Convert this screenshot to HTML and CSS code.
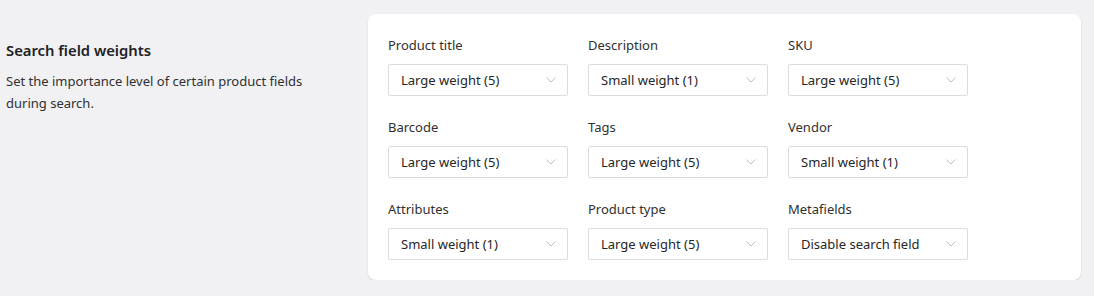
FILE: index.html
```html
<!DOCTYPE html>
<html lang="en">
<head>
<meta charset="UTF-8">
<meta name="viewport" content="width=device-width, initial-scale=1.0">
<title>Search field weights</title>
<link rel="stylesheet" href="styles.css">
</head>
<body>
<div class="section">
    <!-- Section description -->
    <div class="section-info">
        <h2>Search field weights</h2>
        <p>Set the importance level of certain product fields during search.</p>
    </div>

    <!-- Weights card -->
    <div class="card">
        <div class="field-grid">
            <div class="field">
                <label>Product title</label>
                <div class="select"><span>Large weight (5)</span><svg viewBox="0 0 10 6"><path d="M0.5 0.5 L5 5 L9.5 0.5"/></svg></div>
            </div>
            <div class="field">
                <label>Description</label>
                <div class="select"><span>Small weight (1)</span><svg viewBox="0 0 10 6"><path d="M0.5 0.5 L5 5 L9.5 0.5"/></svg></div>
            </div>
            <div class="field">
                <label>SKU</label>
                <div class="select"><span>Large weight (5)</span><svg viewBox="0 0 10 6"><path d="M0.5 0.5 L5 5 L9.5 0.5"/></svg></div>
            </div>
            <div class="field">
                <label>Barcode</label>
                <div class="select"><span>Large weight (5)</span><svg viewBox="0 0 10 6"><path d="M0.5 0.5 L5 5 L9.5 0.5"/></svg></div>
            </div>
            <div class="field">
                <label>Tags</label>
                <div class="select"><span>Large weight (5)</span><svg viewBox="0 0 10 6"><path d="M0.5 0.5 L5 5 L9.5 0.5"/></svg></div>
            </div>
            <div class="field">
                <label>Vendor</label>
                <div class="select"><span>Small weight (1)</span><svg viewBox="0 0 10 6"><path d="M0.5 0.5 L5 5 L9.5 0.5"/></svg></div>
            </div>
            <div class="field">
                <label>Attributes</label>
                <div class="select"><span>Small weight (1)</span><svg viewBox="0 0 10 6"><path d="M0.5 0.5 L5 5 L9.5 0.5"/></svg></div>
            </div>
            <div class="field">
                <label>Product type</label>
                <div class="select"><span>Large weight (5)</span><svg viewBox="0 0 10 6"><path d="M0.5 0.5 L5 5 L9.5 0.5"/></svg></div>
            </div>
            <div class="field">
                <label>Metafields</label>
                <div class="select"><span>Disable search field</span><svg viewBox="0 0 10 6"><path d="M0.5 0.5 L5 5 L9.5 0.5"/></svg></div>
            </div>
        </div>
    </div>
</div>
</body>
</html>
```

FILE: styles.css
```css
body {
    margin: 0;
    padding: 0;
    background-color: #f1f1f4;
    font-family: 'Noto Sans', 'Open Sans', sans-serif;
    color: #202223;
}

.section {
    display: flex;
    align-items: flex-start;
    padding: 14px 13px 0 6px;
}

/* Left column */
.section-info {
    width: 362px;
    flex-shrink: 0;
    padding-top: 25px;
}

.section-info h2 {
    margin: 0 0 9px 0;
    font-size: 14.8px;
    font-weight: 600;
    line-height: 22px;
}

.section-info p {
    margin: 0;
    width: 330px;
    font-size: 13px;
    line-height: 22px;
    color: #303030;
}

/* Card */
.card {
    flex: 1;
    background-color: #ffffff;
    border-radius: 8px;
    box-shadow: 0 1px 2px rgba(0, 0, 0, 0.12);
    padding: 21px 20px 20px 20px;
}

.field-grid {
    display: grid;
    grid-template-columns: repeat(3, 180px);
    column-gap: 20px;
    row-gap: 21px;
}

.field label {
    display: block;
    font-size: 13px;
    line-height: 20px;
    color: #303030;
    margin-bottom: 9px;
}

.select {
    display: flex;
    align-items: center;
    justify-content: space-between;
    height: 32px;
    box-sizing: border-box;
    padding: 0 11px 0 12px;
    border: 1px solid #dcdcdc;
    border-radius: 2px;
    font-size: 13px;
    color: #262626;
}

.select svg {
    width: 10px;
    height: 6px;
    fill: none;
    stroke: #bfbfbf;
    stroke-width: 1;
}
```
